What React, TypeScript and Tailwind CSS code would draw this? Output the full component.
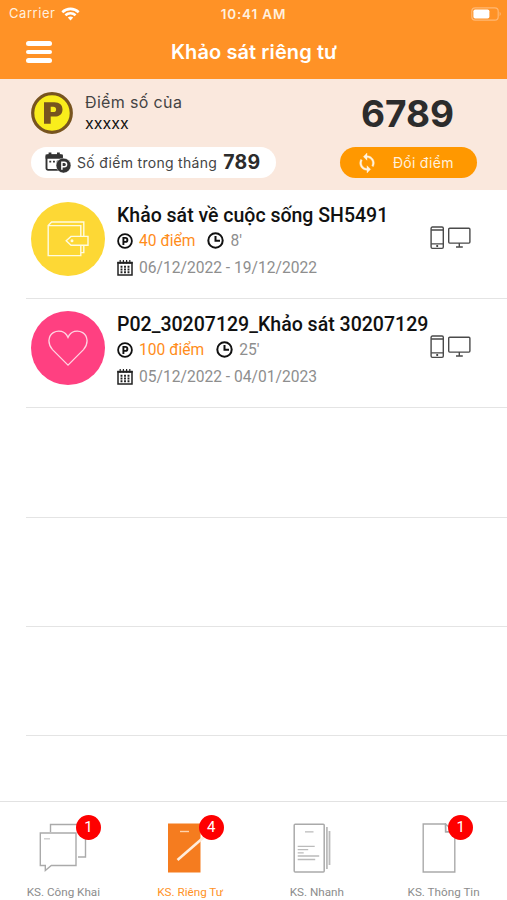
import type { ReactNode } from "react";
import clsx from "clsx";

type Survey = {
  title: string;
  titleClass: string;
  points: number;
  minutes: number;
  date: string;
  color: string;
  icon: ReactNode;
};

function WifiIcon() {
  return (
    <svg width="19" height="14" viewBox="0 0 19 14" fill="none" stroke="#fff" strokeWidth="2.6">
      <path d="M1.3 5.2C6 .8 13 .8 17.7 5.2" />
      <path d="M4.4 8.3c3-2.6 7.200-2.600 10.200 0" />
      <path d="M9.500 13.400 6.800 10.500q2.700-2 5.400 0z" fill="#fff" stroke="none" />
    </svg>
  );
}

function BatteryIcon() {
  return (
    <svg width="31" height="14" viewBox="0 0 31 14" fill="none">
      <rect x=".8" y=".8" width="26.400" height="12.400" rx="3.400" stroke="#ffb873" strokeWidth="1.200" />
      <rect x="2.400" y="2.400" width="16" height="9.200" rx="1.800" fill="#fff" />
      <path d="M28.600 4.800q2.400 2.200 0 4.400z" fill="#ffb873" />
    </svg>
  );
}

function PointCoin() {
  return (
    <svg width="42" height="42" viewBox="0 0 42 42">
      <circle cx="21" cy="21" r="19.300" fill="#f9ed1c" stroke="#77541f" strokeWidth="3.200" />
      <path
        d="M13 10.200h10.300c5.400 0 8.200 3 8.200 7.200 0 4.300-2.900 7.200-8.200 7.200h-3.600v7.200H13zM19.700 14.800v5.300h2.500c2 0 2.900-1 2.900-2.700s-.9-2.600-2.900-2.600z"
        fill="#77541f"
        fillRule="evenodd"
      />
    </svg>
  );
}

function CalendarPointIcon() {
  return (
    <svg width="26" height="22" viewBox="0 0 26 22" fill="none">
      <rect x="1.500" y="3.200" width="15.400" height="14.700" rx="1.600" stroke="#333" strokeWidth="1.900" />
      <path d="M.6 2.400h17.200v4.400H.6zM3.600.6h2.800V4H3.600zM12 .6h2.800V4H12z" fill="#333" />
      <path d="M4.300 9.600h1.900M8 9.600h1.900M11.700 9.600h1.900" stroke="#333" strokeWidth="1.600" />
      <circle cx="18.500" cy="13.600" r="7.400" fill="#333" stroke="#fff" strokeWidth=".4" />
      <path d="M16.900 17.800V10.200h2.300q2.400 0 2.400 2.300t-2.400 2.300h-2.300" stroke="#fff" strokeWidth="1.500" />
    </svg>
  );
}

function SyncIcon() {
  return (
    <svg width="16" height="20" viewBox="4 1 16 22" fill="#fff3df" stroke="#fff3df" strokeWidth=".4">
      <path d="M12 4V1L8 5l4 4V6c3.310 0 6 2.690 6 6 0 1.010-.25 1.970-.7 2.800l1.460 1.460C19.540 15.030 20 13.570 20 12c0-4.420-3.580-8-8-8z" />
      <path d="M12 18c-3.310 0-6-2.690-6-6 0-1.010.25-1.970.7-2.800L5.240 7.740C4.460 8.970 4 10.430 4 12c0 4.420 3.580 8 8 8v3l4-4-4-4v3z" />
    </svg>
  );
}

function WalletIcon() {
  return (
    <svg width="42" height="36" viewBox="0 0 42 36" fill="none" stroke="#fffbe0" strokeWidth="1.400">
      <path d="M1.200 4.600h32.600v30H1.200zM1.200 4.600 4.600 1h32.200v14.400M33.800 31.600h3v-7.400" />
      <path d="M24 15.400h17v8.800H24l-4.800-4.400z" fill="#fdd835" />
      <circle cx="25" cy="19.800" r=".8" />
    </svg>
  );
}

function HeartIcon() {
  return (
    <svg width="40" height="36" viewBox="0 0 40 36" fill="none" stroke="#ffd5e3" strokeWidth="1.300">
      <path d="M20 35.100 4.500 19.600C-1 13.500.4 5.600 5.300 2.600 10.600-.5 17.200 1.100 20 7.500 22.800 1.100 29.400-.5 34.700 2.600c4.900 3 6.300 10.900.8 17z" />
    </svg>
  );
}

function PointIcon() {
  return (
    <svg width="16" height="16" viewBox="0 0 16 16" fill="none" stroke="#111">
      <circle cx="8" cy="8" r="6.900" strokeWidth="1.800" />
      <path d="M6.400 12V4.900h1.900q2.100 0 2.100 2T8.300 8.900H6.400" strokeWidth="1.900" />
    </svg>
  );
}

function ClockIcon() {
  return (
    <svg width="17" height="17" viewBox="0 0 17 17" fill="none" stroke="#111" strokeWidth="2">
      <circle cx="8.500" cy="8.500" r="7.200" />
      <path d="M8.500 4v4.700H13" />
    </svg>
  );
}

function CalendarIcon() {
  return (
    <svg width="16" height="16" viewBox="0 0 16 16" fill="none" stroke="#222">
      <path d="M1 2.600h14v12.500H1z" strokeWidth="1.500" />
      <path d="M.4 2.900h15.200" strokeWidth="1.800" />
      <path d="M3.200 0v3.500M6.400 0v3.500M9.600 0v3.500M12.800 0v3.500" strokeWidth="1.200" />
      <path d="M4.500 5.700v7.500M8 5.700v7.500M11.500 5.700v7.500" strokeWidth="1.900" strokeDasharray="2.100 .7" />
    </svg>
  );
}

function DevicesIcon() {
  return (
    <svg width="42" height="24" viewBox="0 0 42 24" fill="none" stroke="#4a4a4a" strokeWidth="1.400">
      <rect x="1.100" y="1" width="12.200" height="21.400" rx="1.300" />
      <path d="M1.100 4h12.200M1.100 17.900h12.200" />
      <circle cx="7.200" cy="20" r="1.100" fill="#333" stroke="none" />
      <rect x="18.700" y="2.200" width="21.200" height="14.900" rx="1" />
      <path d="M29.300 17.100v3.800M26 21h6.800" />
    </svg>
  );
}

function PublicIcon() {
  return (
    <svg width="48" height="50" viewBox="0 0 48 50" fill="none" stroke="#aaa" strokeWidth="1.400">
      <path d="M11.500 9V1.500h35V34h-7.500" />
      <path d="M1.300 10H37v32.500H12.300l-6 5v-5h-5z" />
      <path d="M5 15.800h6" stroke="#ccc" />
    </svg>
  );
}

function PrivateIcon() {
  return (
    <svg width="40" height="50" viewBox="0 0 40 50" fill="none">
      <path d="M0 .5h32.500v49H0z" fill="#f57c1f" />
      <path d="M12 8.500h9" stroke="#ffd3ae" strokeWidth="1.400" />
      <path d="M9.500 37 36 14" stroke="#ffeddc" strokeWidth="2.600" />
    </svg>
  );
}

function FastIcon() {
  return (
    <svg width="38" height="50" viewBox="0 0 38 50" fill="none" stroke="#aaa" strokeWidth="1.500">
      <rect x="1.200" y="1.200" width="30" height="47.800" rx="1" />
      <path d="M33.900 4v42M36.500 8v34" stroke="#bbb" strokeWidth="1.800" />
      <path d="M12 8.800h8.500M4.700 23.300h17M4.700 26.600h10.500M4.700 29.800h6M4.700 33h21.500M4.700 36.500h17.500" stroke="#bbb" strokeWidth="1.300" />
    </svg>
  );
}

function InfoIcon() {
  return (
    <svg width="34" height="50" viewBox="0 0 34 50" fill="none" stroke="#aaa" strokeWidth="1.400">
      <path d="M23.500 1H1.200v48h31.600V8.800h-9z" />
      <path d="M23.500 1v7.800h9z" />
    </svg>
  );
}

const surveys: Survey[] = [
  {
    title: "Khảo sát về cuộc sống SH5491",
    titleClass: "text-[19.500px]",
    points: 40,
    minutes: 8,
    date: "06/12/2022 - 19/12/2022",
    color: "bg-[#fdd835]",
    icon: <WalletIcon />,
  },
  {
    title: "P02_30207129_Khảo sát 30207129",
    titleClass: "text-[19.550px]",
    points: 100,
    minutes: 25,
    date: "05/12/2022 - 04/01/2023",
    color: "bg-[#ff4081]",
    icon: <HeartIcon />,
  },
];

const tabs = [
  { label: "KS. Công Khai", icon: <PublicIcon />, badge: 1, iconClass: "ml-[38.500px]", badgeClass: "left-[76px]" },
  { label: "KS. Riêng Tư", icon: <PrivateIcon />, badge: 4, active: true, iconClass: "ml-[41px]", badgeClass: "left-[72px]" },
  { label: "KS. Nhanh", icon: <FastIcon />, iconClass: "ml-[39px]" },
  { label: "KS. Thông Tin", icon: <InfoIcon />, badge: 1, iconClass: "ml-[41.500px]", badgeClass: "left-[68px]" },
];

function SurveyRow({ survey }: { survey: Survey }) {
  return (
    <div className="ml-[26px] flex h-[109.200px] border-b border-[#e4e4e4] pl-[5px]">
      <div className={clsx("mt-[12px] flex size-[74px] shrink-0 items-center justify-center rounded-full", survey.color)}>
        {survey.icon}
      </div>
      <div className="ml-3 w-[313px] shrink-0 pt-[13px] whitespace-nowrap">
        <h2 className={clsx("h-[24px] leading-[25px] font-medium text-[#111]", survey.titleClass)}>{survey.title}</h2>
        <div className="flex h-[27px] items-center text-[15.600px]">
          <PointIcon />
          <span className="ml-1.5 pt-[3px] text-[#ff8c1a]">{survey.points} điểm</span>
          <span className="ml-3">
            <ClockIcon />
          </span>
          <span className="ml-1.5 pt-[3px] text-[#8e8e8e]">{survey.minutes}'</span>
        </div>
        <div className="flex h-[27px] items-center text-[15.600px] text-[#8e8e8e]">
          <CalendarIcon />
          <span className="ml-1.5 pt-[3px]">{survey.date}</span>
        </div>
      </div>
      <div className="mt-[36px]">
        <DevicesIcon />
      </div>
    </div>
  );
}

export default function App() {
  return (
    <div className="flex h-[900px] w-[507px] flex-col overflow-hidden bg-white font-['Roboto',sans-serif]">
      {/* Status bar + title */}
      <header className="h-[79px] shrink-0 bg-[#ff9226] font-['Inter',sans-serif] text-white">
        <div className="grid h-[27px] grid-cols-3 items-center text-[13px]">
          <div className="flex items-center gap-1.5 pl-[9px] text-[#fff0df]">
            <span className="tracking-[0.550px]">Carrier</span>
            <WifiIcon />
          </div>
          <span className="pt-px text-center text-[13.500px] font-semibold tracking-[0.850px] text-[#fff0df]">10:41 AM</span>
          <div className="flex justify-end pr-[5px]">
            <BatteryIcon />
          </div>
        </div>
        <div className="grid h-[50px] grid-cols-[60px_1fr_60px] items-center">
          <div className="flex flex-col gap-1 pl-[26px]">
            <span className="h-[4.500px] w-[26px] rounded-full bg-white" />
            <span className="h-[4.500px] w-[26px] rounded-full bg-white" />
            <span className="h-[4.500px] w-[26px] rounded-full bg-white" />
          </div>
          <h1 className="pl-px text-center text-[20px] font-semibold tracking-[0.100px]">Khảo sát riêng tư</h1>
        </div>
      </header>

      {/* Points */}
      <section className="flex h-[111px] shrink-0 justify-between bg-[#fae8dd] pr-[30px] pl-[31px] font-['Inter',sans-serif]">
        <div>
          <div className="flex h-[68px] pt-[13px]">
            <PointCoin />
            <div className="ml-3 text-[16px] leading-[21px] text-[#444]">
              <p className="tracking-[0.350px]">Điểm số của</p>
              <p className="text-[#111]">xxxxx</p>
            </div>
          </div>
          <div className="flex h-[31px] w-[245px] items-center rounded-full bg-white pl-[14px] whitespace-nowrap">
            <CalendarPointIcon />
            <span className="ml-[6px] text-[14px] tracking-[0.300px] text-[#444]">Số điểm trong tháng</span>
            <span className="ml-[6px] pt-px text-[19.500px] font-bold tracking-[0.300px] text-[#2c2c2c]">789</span>
          </div>
        </div>
        <div className="w-[137px]">
          <p className="h-[68px] pr-[2px] text-center text-[37px] leading-[69px] font-bold text-[#2c2c2c]">6789</p>
          <button className="flex h-[31px] w-full items-center rounded-full bg-[#ff9800] pl-[19px] text-[14px] text-[#fff0dc]">
            <SyncIcon />
            <span className="ml-[18px] tracking-[0.250px]">Đổi điểm</span>
          </button>
        </div>
      </section>

      {/* Survey list */}
      <main className="min-h-0 flex-1 overflow-hidden">
        {surveys.map((survey) => (
          <SurveyRow key={survey.title} survey={survey} />
        ))}
        {[1, 2, 3].map((row) => (
          <div key={row} className="ml-[26px] h-[109.200px] border-b border-[#e4e4e4]" />
        ))}
      </main>

      {/* Tabs */}
      <nav className="grid h-[99px] shrink-0 grid-cols-4 border-t border-[#e2e2e2]">
        {tabs.map((tab) => (
          <div key={tab.label} className="relative pt-[21px]">
            <div className={tab.iconClass}>{tab.icon}</div>
            {tab.badge && (
              <span className={clsx("absolute top-[13px] flex size-[25px] items-center justify-center rounded-full bg-[#fe0000] text-[15px] text-white", tab.badgeClass)}>
                {tab.badge}
              </span>
            )}
            <p className={clsx("mt-[11px] text-center text-[11.700px] leading-4", tab.active ? "text-[#ff9226]" : "text-[#8c8c8c]")}>
              {tab.label}
            </p>
          </div>
        ))}
      </nav>
    </div>
  );
}
